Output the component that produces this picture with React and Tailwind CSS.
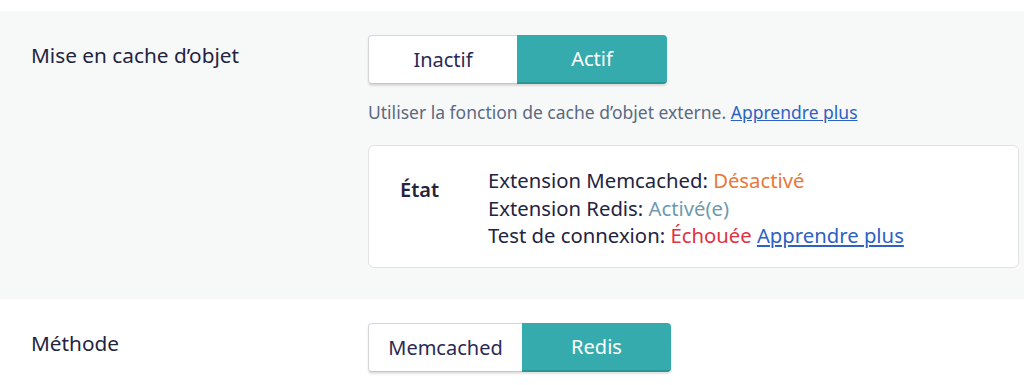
import React from "react";

const font = { fontFamily: '"Noto Sans", "Open Sans", sans-serif' };

function Toggle({ left, right, leftW, rightW }) {
  return (
    <div className="flex h-[49px] w-fit self-start rounded-[4px] shadow-[0_2px_2px_rgba(0,0,0,0.12)]">
      <button
        type="button"
        className={`${leftW} flex items-center justify-center rounded-l-[4px] border border-r-0 border-[#d6d6dc] border-b-[#c4c4cc] bg-white text-[20px] text-[#2a2a55]`}
      >
        {left}
      </button>
      <button
        type="button"
        className={`${rightW} flex items-center justify-center rounded-r-[4px] border-b-2 border-[#2a9597] bg-[#36abad] text-[20px] text-white`}
      >
        {right}
      </button>
    </div>
  );
}

export default function App() {
  return (
    <div className="w-[1024px] h-[385px] overflow-hidden bg-white pt-[11px] text-[#24243f]" style={font}>
      {/* Object cache section */}
      <section className="flex bg-[#f7f8f8] pl-[31px] pr-[5px] pt-[24px] pb-[31px]">
        <div className="w-[337px] shrink-0 pt-[6px] text-[20.8px] leading-[28px]">Mise en cache d’objet</div>
        <div className="flex flex-1 flex-col">
          <Toggle left="Inactif" right="Actif" leftW="w-[149px]" rightW="w-[150px]" />
          <p className="mt-[15px] text-[17.5px] leading-[26px] text-[#5b6a82]">
            Utiliser la fonction de cache d’objet externe.{" "}
            <a href="#" className="text-[#2d62c4] underline">Apprendre plus</a>
          </p>
          <div className="mt-[20px] flex h-[123px] items-start rounded-[6px] border border-[#e3e3e6] bg-white pl-[31px] pt-[21px]">
            <div className="w-[88px] pt-[8px] text-[20px] font-semibold">État</div>
            <div className="text-[20.3px] leading-[27.5px]">
              <div>
                Extension Memcached: <span className="text-[#e8793a]">Désactivé</span>
              </div>
              <div>
                Extension Redis: <span className="text-[#6f9bb0]">Activé(e)</span>
              </div>
              <div>
                Test de connexion: <span className="text-[#df3241]">Échouée</span>{" "}
                <a href="#" className="text-[#2d62c4] underline">Apprendre plus</a>
              </div>
            </div>
          </div>
        </div>
      </section>

      {/* Method section */}
      <section className="flex px-[31px] pt-[24px]">
        <div className="w-[337px] shrink-0 pt-[6px] text-[20.8px] leading-[28px]">Méthode</div>
        <Toggle left="Memcached" right="Redis" leftW="w-[154px]" rightW="w-[149px]" />
      </section>
    </div>
  );
}
